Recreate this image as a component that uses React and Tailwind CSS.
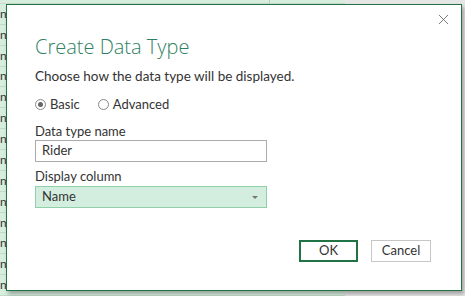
import { X } from "lucide-react";

const rows = ["nl", "nl", "nl", "nl", "nl", "nl", "nl", "ns", "ns", "ns", "ns", "ns", "ns", "ns"];

function Sheet() {
  return (
    <div className="flex h-full w-full">
      <div className="flex w-[345px] flex-col bg-[#d7eedf]">
        <div className="flex h-[4px] border-b border-[#c6dccd]">
          <div className="w-[270px] border-r border-[#c6c6c6]" />
          <div className="flex-1" />
        </div>
        {rows.map((r, i) => (
          <div
            key={i}
            className="flex h-[21px] items-center overflow-hidden border-b border-[#c3d9ca] text-[12px] text-[#333]"
          >
            <span>{r}</span>
          </div>
        ))}
      </div>
      <div className="flex-1 bg-[#e6e6e6]" />
    </div>
  );
}

export default function App() {
  return (
    <div
      className="relative h-[296px] w-[465px] overflow-hidden"
      style={{ fontFamily: 'Lato, "Open Sans", sans-serif' }}
    >
      <Sheet />

      <div className="absolute left-[6px] top-[4px] flex h-[287px] w-[456px] flex-col border border-[#217346] bg-white shadow-[2px_3px_4px_rgba(0,0,0,0.3)]">
        <div className="flex h-[22px] justify-end pr-[9px] pt-[6px]">
          <X size={17} strokeWidth={1.1} className="text-[#555]" />
        </div>

        <div className="flex flex-col pl-[28px]">
          <h1
            className="mt-[6px] text-[20px] font-light leading-[28px] text-[#2f7f62]"
            style={{ fontFamily: '"Open Sans", sans-serif' }}
          >
            Create Data Type
          </h1>

          <p className="mt-[5px] text-[13.5px] leading-[20px] text-[#333]">
            Choose how the data type will be displayed.
          </p>

          <div className="mt-[9px] flex items-center gap-[4px] text-[13px] leading-[18px] text-[#333]">
            <span className="flex h-[11px] w-[11px] items-center justify-center rounded-full border border-[#888]">
              <span className="h-[5px] w-[5px] rounded-full bg-[#666]" />
            </span>
            <span>Basic</span>
            <span className="ml-[14px] h-[11px] w-[11px] rounded-full border border-[#888]" />
            <span>Advanced</span>
          </div>

          <label className="mt-[9px] text-[13px] leading-[18px] text-[#333]">
            Data type name
          </label>
          <div className="flex h-[22px] w-[232px] items-center border border-[#ababab] px-[6px] text-[13px] text-[#333]">
            Rider
          </div>

          <label className="mt-[5px] text-[13px] leading-[18px] text-[#333]">
            Display column
          </label>
          <div className="mt-[1px] flex h-[22px] w-[232px] items-center justify-between border border-[#8fd0a8] bg-[#d3eedf] px-[6px] text-[13px] text-[#333]">
            <span>Name</span>
            <span className="mr-[2px] h-0 w-0 border-x-[3px] border-t-[3px] border-x-transparent border-t-[#777]" />
          </div>
        </div>

        <div className="mt-auto mb-[28px] flex justify-end gap-[13px] pr-[30px]">
          <button className="flex h-[22px] w-[59px] items-center justify-center border border-[#217346] text-[13px] text-[#333] outline outline-1 -outline-offset-2 outline-[#217346]">
            OK
          </button>
          <button className="flex h-[22px] w-[60px] items-center justify-center border border-[#c6c6c6] text-[13px] text-[#333]">
            Cancel
          </button>
        </div>
      </div>
    </div>
  );
}
